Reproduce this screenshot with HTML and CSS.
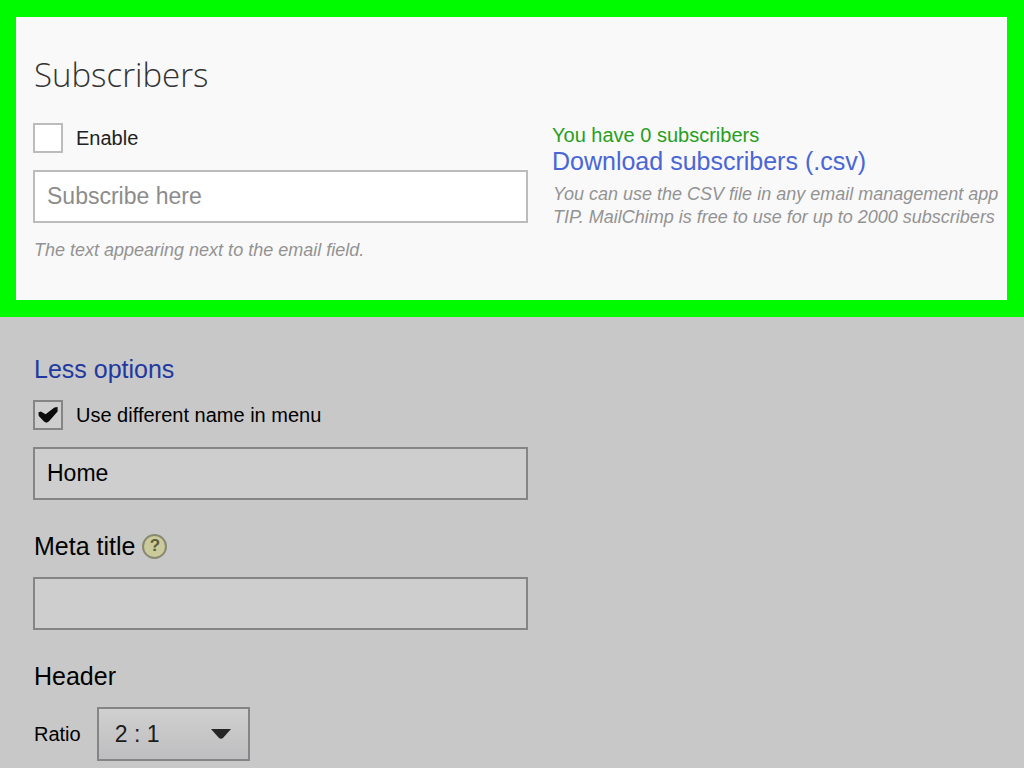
FILE: index.html
```
<!DOCTYPE html>
<html lang="en">
<head>
    <meta charset="UTF-8">
    <meta name="viewport" content="width=device-width, initial-scale=1.0">
    <title>Page settings</title>
    <link rel="stylesheet" href="styles.css">
</head>
<body>
    <section class="subscribers">
        <h1>Subscribers</h1>
        <div class="columns">
            <div class="column">
                <div class="check-row">
                    <input type="checkbox" class="checkbox" id="enable">
                    <label for="enable">Enable</label>
                </div>
                <input type="text" class="field" placeholder="Subscribe here" aria-label="Subscribe text" aria-describedby="subscribe-hint">
                <p class="hint" id="subscribe-hint">The text appearing next to the email field.</p>
            </div>
            <div class="column download">
                <p class="count">You have 0 subscribers</p>
                <a href="#" class="link">Download subscribers (.csv)</a>
                <p class="hint">You can use the CSV file in any email management app<br>TIP. MailChimp is free to use for up to 2000 subscribers</p>
            </div>
        </div>
    </section>

    <section class="options">
        <a href="#" class="link">Less options</a>
        <div class="check-row">
            <input type="checkbox" class="checkbox" id="menu-name" checked>
            <label for="menu-name">Use different name in menu</label>
        </div>
        <input type="text" class="field" value="Home" aria-label="Name in menu">

        <div class="title-row">
            <label for="meta-title">Meta title</label>
            <button type="button" class="help" aria-label="Help">?</button>
        </div>
        <input type="text" class="field" id="meta-title">

        <h2 class="title-row">Header</h2>
        <div class="ratio-row">
            <label for="ratio">Ratio</label>
            <div class="select-wrap">
                <select id="ratio">
                    <option>2 : 1</option>
                </select>
                <svg class="arrow" viewBox="0 0 20 10" aria-hidden="true">
                    <path d="M0 0H20L12 9Q10 10.500 8 9Z" fill="#262626"/>
                </svg>
            </div>
        </div>
    </section>
</body>
</html>
```
FILE: styles.css
```
* {
    box-sizing: border-box;
}

body {
    margin: 0;
    font-family: "Liberation Sans", Arial, sans-serif;
    font-size: 20px;
    color: #000;
    background-color: #c8c8c8;
}

h1, h2, p {
    margin: 0;
    font-weight: normal;
}

/* highlighted block */
.subscribers {
    border: 17px solid #00fa00;
    border-left-width: 16px;
    padding: 37px 0 38px 17px;
    background-color: #f9f9f9;
    color: #222;
    overflow: hidden;
}

h1 {
    margin-bottom: 26px;
    padding-left: 1px;
    font-family: "Open Sans", sans-serif;
    font-size: 33px;
    font-weight: 300;
    line-height: 42px;
    color: #333;
}

.columns {
    display: grid;
    grid-template-columns: minmax(0, 495px) minmax(0, 1fr);
    gap: 24px;
}

.check-row {
    display: flex;
    align-items: center;
    gap: 13px;
    height: 32px;
    margin-bottom: 16px;
}

.checkbox {
    appearance: none;
    display: grid;
    place-items: center;
    width: 30px;
    height: 30px;
    margin: 0;
    border: 2px solid #bcbcbc;
    background-color: #fff;
}

.checkbox:checked::before {
    content: "";
    width: 20px;
    height: 16px;
    background-color: #0a0a0a;
    clip-path: polygon(2% 34%, 14% 28%, 38% 46%, 82% 3%, 98% 0, 98% 28%, 54% 90%, 42% 98%, 30% 90%, 4% 56%);
}

.field {
    display: block;
    width: 100%;
    max-width: 495px;
    height: 53px;
    padding: 0 12px;
    border: 2px solid #bcbcbc;
    background-color: #fff;
    color: #000;
    font-family: inherit;
    font-size: 23px;
}

.field::placeholder {
    color: #8c8c8c;
}

.hint {
    margin-top: 16px;
    padding-left: 1px;
    font-size: 18px;
    font-style: italic;
    line-height: 23px;
    color: #939393;
}

.link {
    display: block;
    font-size: 25px;
    line-height: 30px;
    color: #2238a0;
    text-decoration: none;
}

.download {
    white-space: nowrap;
}

.download .count {
    line-height: 26px;
    color: #26a01c;
}

.download .link {
    line-height: 26px;
    color: #4a66d6;
}

.download .hint {
    margin-top: 9px;
}

/* dimmed part of the form */
.options {
    padding: 37px 33px 6px;
}

.options .link {
    padding-left: 1px;
}

.options .check-row {
    margin-top: 15px;
}

.options .checkbox,
.options .field {
    border-color: #858585;
    background-color: #cecece;
}

.title-row {
    display: flex;
    align-items: center;
    gap: 7px;
    margin: 31px 0 16px;
    padding-left: 1px;
    font-size: 25px;
    line-height: 30px;
}

.help {
    width: 25px;
    height: 25px;
    padding: 0;
    border: 2px solid #888873;
    border-radius: 50%;
    background-color: #cbca9b;
    color: #5c5a3c;
    font-family: inherit;
    font-size: 17px;
    font-weight: bold;
    line-height: 20px;
}

.ratio-row {
    display: flex;
    align-items: center;
    gap: 16px;
    padding-left: 1px;
}

.select-wrap {
    position: relative;
}

.select-wrap select {
    appearance: none;
    display: block;
    width: 153px;
    height: 54px;
    padding: 0 16px;
    border: 2px solid #858585;
    border-radius: 0;
    background: linear-gradient(#d0d0d0, #bebec0);
    color: #1c1c1c;
    font-family: inherit;
    font-size: 23px;
}

.arrow {
    position: absolute;
    top: 22px;
    right: 19px;
    width: 20px;
    height: 10px;
    pointer-events: none;
}
```
